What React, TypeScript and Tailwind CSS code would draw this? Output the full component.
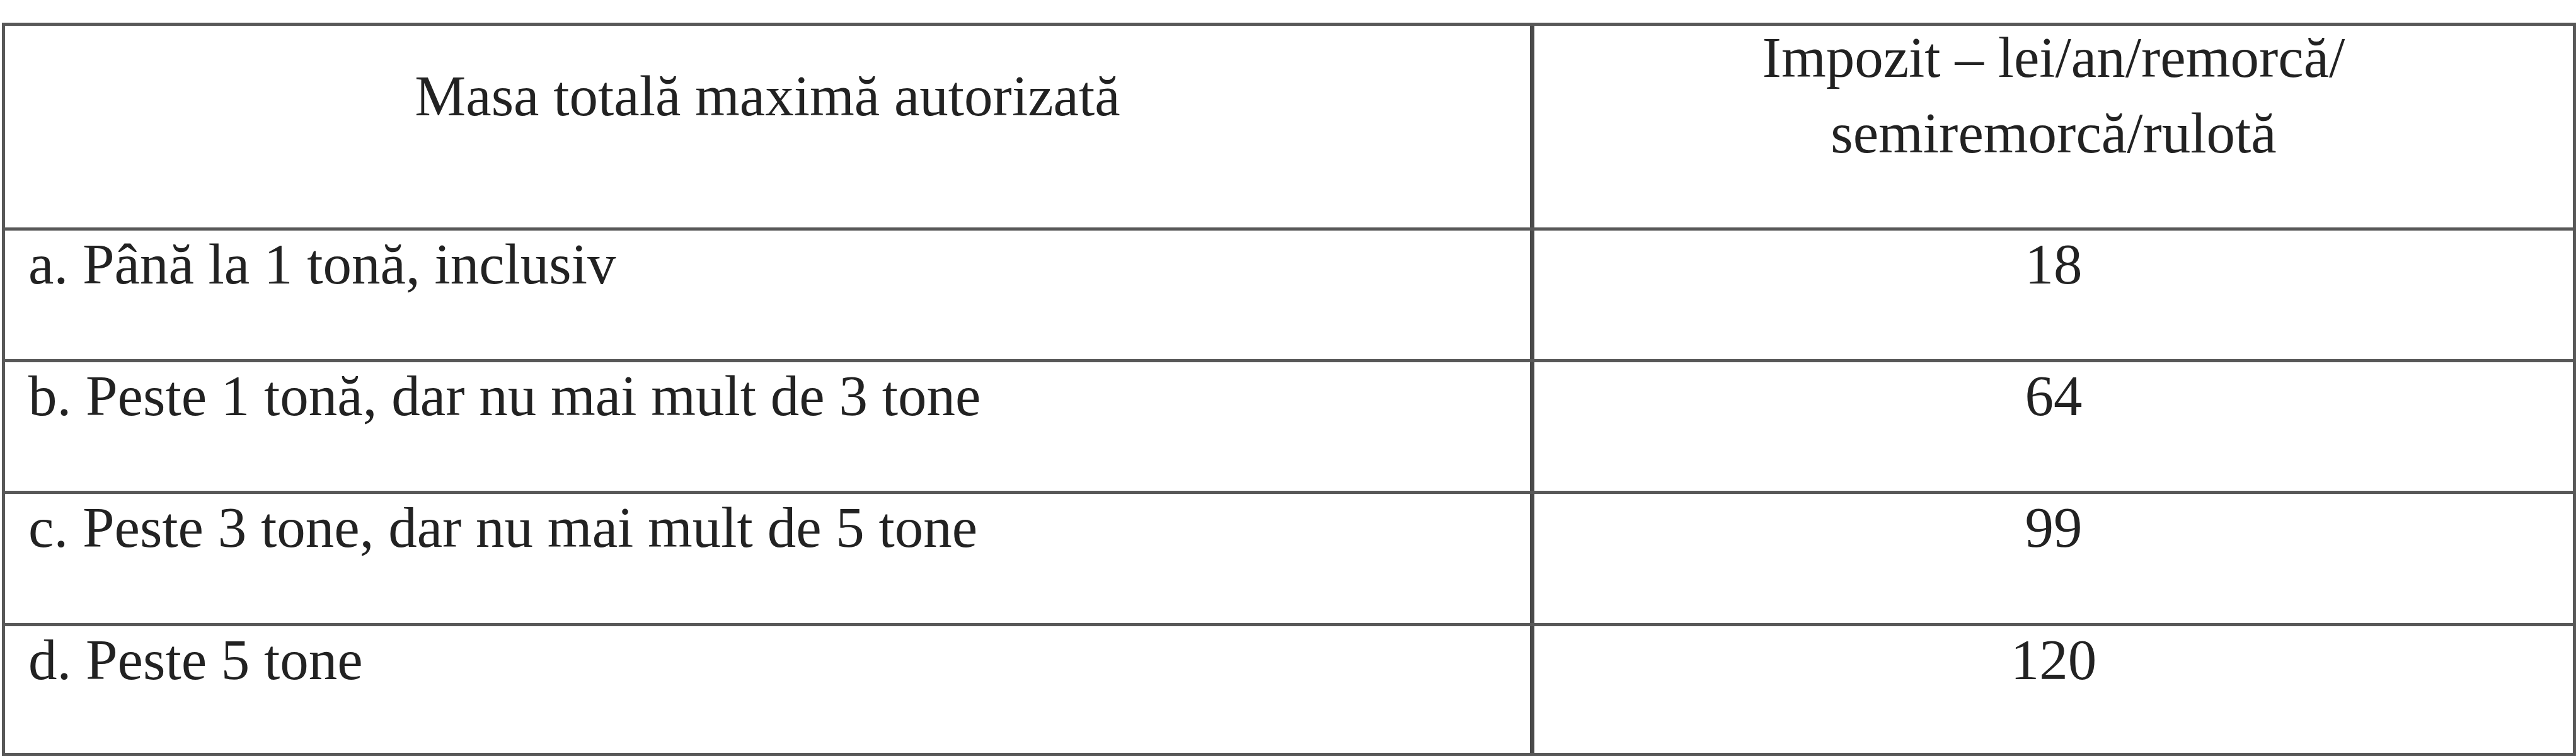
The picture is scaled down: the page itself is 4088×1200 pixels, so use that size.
import React from "react";

const rows = [
  { label: "a. Până la 1 tonă, inclusiv", value: "18", h: "h-[209px]" },
  { label: "b. Peste 1 tonă, dar nu mai mult de 3 tone", value: "64", h: "h-[209px]" },
  { label: "c. Peste 3 tone, dar nu mai mult de 5 tone", value: "99", h: "h-[210px]" },
  { label: "d. Peste 5 tone", value: "120", h: "h-[206px]" },
];

export default function App() {
  return (
    <div className="w-[4088px] h-[1200px] bg-white overflow-hidden pt-[36px] pl-[3px] font-['Liberation_Serif','Times_New_Roman',serif] text-[91px] text-[#222222]">
      <div className="w-[4085px] border-[5px] border-[#585858] flex flex-col">
        <div className="grid grid-cols-[2427px_1fr] h-[320px]">
          <div className="border-r-[7px] border-[#4a4a4a] text-center pt-[58px] leading-[108px]">
            Masa totală maximă autorizată
          </div>
          <div className="text-center leading-[120px]">
            <div className="-mt-[9px]">
              Impozit – lei/an/remorcă/
              <br />
              semiremorcă/rulotă
            </div>
          </div>
        </div>
        {rows.map((r) => (
          <div
            key={r.value}
            className={`grid grid-cols-[2427px_1fr] border-t-[5px] border-[#585858] ${r.h}`}
          >
            <div className="border-r-[7px] border-[#4a4a4a] pl-[37px] leading-[108px] whitespace-nowrap">
              {r.label}
            </div>
            <div className="text-center leading-[108px]">{r.value}</div>
          </div>
        ))}
      </div>
    </div>
  );
}
